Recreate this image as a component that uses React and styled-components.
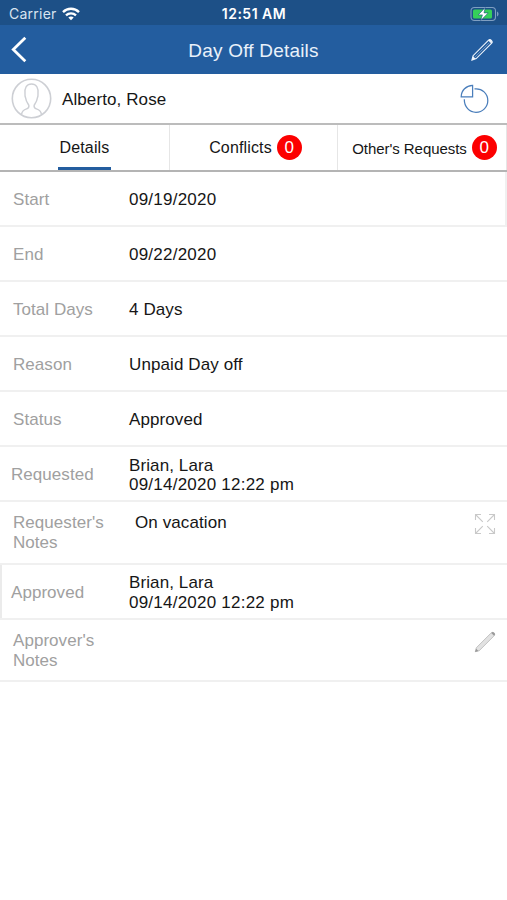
import React, { useState } from 'react';
import styled, { createGlobalStyle } from 'styled-components';

const rows = [
  { label: 'Start', value: '09/19/2020', edge: 'right' },
  { label: 'End', value: '09/22/2020' },
  { label: 'Total Days', value: '4 Days' },
  { label: 'Reason', value: 'Unpaid Day off' },
  { label: 'Status', value: 'Approved' },
  { label: 'Requested', value: 'Brian, Lara', date: '09/14/2020 12:22 pm', outdent: true },
  { label: "Requester's Notes", value: 'On vacation', notes: true, icon: 'expand' },
  { label: 'Approved', value: 'Brian, Lara', date: '09/14/2020 12:22 pm', outdent: true, edge: 'left' },
  { label: "Approver's Notes", value: '', notes: true, icon: 'pencil' },
];

const WifiIcon = () => (
  <svg width="18" height="14" viewBox="0 0 18 14" fill="none" stroke="#fff" strokeWidth="2.3">
    <path d="M1 5.1C5.4 .6 12.6 .6 17 5.1" />
    <path d="M4 8.3C6.8 5.6 11.2 5.6 14 8.3" />
    <path d="M6.3 10.5C7.8 9.1 10.2 9.1 11.7 10.5L9 13.3Z" fill="#fff" stroke="none" />
  </svg>
);

const BatteryIcon = () => (
  <svg width="29" height="16" viewBox="0 0 29 16">
    <rect x="1" y="1.5" width="24.5" height="13" rx="3.4" fill="none" stroke="#7f9fc2" strokeWidth="1.1" />
    <path d="M27 5.5C29 6.4 29 9.6 27 10.5Z" fill="#7f9fc2" />
    <rect x="3" y="3.5" width="19" height="9" rx="1.6" fill="#35d05a" />
    <path d="M15.2 1.6L8.2 8.9H12.4L10.7 14.5L18.2 6.9H14Z" fill="#fff" stroke="#1d5087" strokeWidth=".6" />
  </svg>
);

const BackIcon = () => (
  <svg width="16" height="27" viewBox="0 0 16 27" fill="none" stroke="#fff" strokeWidth="2.8">
    <path d="M14.3 1.8L2.3 13.5L14.3 25.2" />
  </svg>
);

const EditIcon = () => (
  <svg width="24" height="24" viewBox="0 0 24 24" fill="none" stroke="#eef4fb" strokeWidth="1.15">
    <path d="M2 22L3.1 17.7L18.6 2.2C19.4 1.4 20.4 1.4 21.3 2.3S22.5 4.3 21.7 5.1L6.2 20.6Z" />
    <path d="M5 19L19.3 4.7" strokeWidth=".6" strokeOpacity=".6" />
    <path d="M2 22L3 18.2L5.8 20.7ZM18.2 2.6L21.2 5.6L22 4.5C22.2 3 20.8 1.5 19.4 1.6Z" fill="#eef4fb" stroke="none" />
  </svg>
);

const PieIcon = () => (
  <svg width="30" height="30" viewBox="0 0 30 30" fill="none" stroke="#4a7ebb" strokeWidth="1.25">
    <path d="M12.6 12.8H1.2C1.2 6.4 6.2 1.5 12.6 1.3Z" />
    <path d="M14.5 4.9C22.3 3.9 27.8 9.9 27.8 16.5S22.6 28.3 16 28.3C9.4 28.3 4.2 22.9 4.3 15.3" />
  </svg>
);

const AvatarIcon = () => (
  <svg width="41" height="41" viewBox="0 0 41 41" fill="none" stroke="#cdcfd4" strokeWidth="1.4">
    <circle cx="20.5" cy="20.5" r="19.2" strokeWidth="1.6" />
    <path d="M10.5 36.6C11 33.2 12.5 31.8 15.6 30.9C17.6 30.3 18.1 29.4 17.9 27.6C17.7 26.1 15.3 24.6 14.8 20.6C14.3 19.3 13.8 17.8 14 16.5C13.2 9.8 15.8 6 20.5 6S27.8 9.8 27 16.5C27.2 17.8 26.7 19.3 26.2 20.6C25.7 24.6 23.3 26.1 23.1 27.6C22.9 29.4 23.4 30.3 25.4 30.9C28.5 31.8 30 33.2 30.5 36.6" />
  </svg>
);

const ExpandIcon = () => (
  <svg width="22" height="22" viewBox="0 0 22 22" fill="none" stroke="#c9c9c9" strokeWidth="1.1">
    <path d="M1.5 7V1.5H7M1.5 1.5L8.8 8.8M15 1.5H20.5V7M20.5 1.5L13.2 8.8M1.5 15V20.5H7M1.5 20.5L8.8 13.2M15 20.5H20.5V15M20.5 20.5L13.2 13.2" />
  </svg>
);

const PencilIcon = () => (
  <svg width="22" height="22" viewBox="0 0 22 22" fill="none">
    <path d="M1.3 20.7L2.3 16.8L17 2.1C18 1.1 19 1.2 19.9 2.1S20.9 4 19.9 5L5.2 19.7Z" fill="#e2e2e2" stroke="#c2c2c2" />
    <path d="M1 21L2.2 17.8L4.4 20ZM17.2 1.9L20.1 4.8L21 3.6C21 2 20 1 18.5 1Z" fill="#999" />
  </svg>
);

const App = () => {
  const [tab, setTab] = useState('Details');

  return (
    <Screen>
      <GlobalStyle />
      <StatusBar>
        <Carrier>
          Carrier
          <WifiIcon />
        </Carrier>
        <Clock>12:51 AM</Clock>
        <Battery>
          <BatteryIcon />
        </Battery>
      </StatusBar>
      <NavBar>
        <IconButton aria-label="Back">
          <BackIcon />
        </IconButton>
        <Title>Day Off Details</Title>
        <IconButton aria-label="Edit" $end>
          <EditIcon />
        </IconButton>
      </NavBar>
      <Employee>
        <AvatarIcon />
        <Name>Alberto, Rose</Name>
        <PieIcon />
      </Employee>
      <Tabs>
        <Tab onClick={() => setTab('Details')}>
          <TabLabel $active={tab === 'Details'}>Details</TabLabel>
        </Tab>
        <Tab onClick={() => setTab('Conflicts')} $shift="4px">
          <TabLabel $active={tab === 'Conflicts'}>Conflicts</TabLabel>
          <Badge>0</Badge>
        </Tab>
        <Tab onClick={() => setTab('Others')} $shift="5px">
          <TabLabel $active={tab === 'Others'} $small>Other's Requests</TabLabel>
          <Badge>0</Badge>
        </Tab>
      </Tabs>
      {rows.map((row) => (
        <Row key={row.label} $notes={row.notes} $edge={row.edge}>
          <Label $outdent={row.outdent}>{row.label}</Label>
          <Value $notes={row.notes}>
            <Line $date={/^\d\d/.test(row.value)}>{row.value}</Line>
            {row.date && <Line $date>{row.date}</Line>}
          </Value>
          {row.icon === 'expand' && <ExpandIcon />}
          {row.icon === 'pencil' && <PencilIcon />}
        </Row>
      ))}
    </Screen>
  );
};

export default App;

const GlobalStyle = createGlobalStyle`
  * {
    box-sizing: border-box;
  }

  body {
    margin: 0;
    background: #fff;
  }

  svg {
    display: block;
    flex: none;
  }
`;

const Screen = styled.div`
  width: 507px;
  height: 900px;
  overflow: hidden;
  background: #fff;
  color: #161616;
  font-family: 'Liberation Sans', Arial, sans-serif;
  font-size: 17px;
`;

const StatusBar = styled.div`
  display: grid;
  grid-template-columns: 1fr auto 1fr;
  align-items: center;
  height: 25px;
  padding: 2px 8px 0 9px;
  background: #1d5087;
  color: #fff;
  font-family: Inter, sans-serif;
  font-size: 14px;
`;

const Carrier = styled.div`
  display: flex;
  align-items: center;
  gap: 5px;
  color: #d9e4f0;
  letter-spacing: 0.25px;
`;

const Clock = styled.div`
  font-weight: 600;
  letter-spacing: 0.5px;
`;

const Battery = styled.div`
  display: flex;
  justify-content: flex-end;
`;

const NavBar = styled.div`
  display: grid;
  grid-template-columns: 60px 1fr 60px;
  align-items: center;
  height: 49px;
  padding: 0 13px 0 11px;
  background: #235d9f;
`;

const IconButton = styled.button`
  display: flex;
  justify-content: ${(props) => (props.$end ? 'flex-end' : 'flex-start')};
  padding: 0;
  border: none;
  background: none;
  cursor: pointer;
`;

const Title = styled.div`
  padding: 2px 0 0 2px;
  color: #e9f1fa;
  font-size: 19px;
  letter-spacing: 0.2px;
  text-align: center;
`;

const Employee = styled.div`
  display: flex;
  align-items: center;
  height: 51px;
  padding: 0 17px 0 11px;
  border-bottom: 2px solid #bcbcbc;
`;

const Name = styled.div`
  flex: 1;
  margin-left: 10px;
  padding-top: 2px;
  letter-spacing: 0.1px;
`;

const Tabs = styled.div`
  display: grid;
  grid-template-columns: 170px 168px 169px;
  height: 47px;
  border-bottom: 2px solid #b4b4b4;
`;

const Tab = styled.div`
  display: flex;
  align-items: center;
  justify-content: center;
  gap: 5px;
  border-right: 1px solid #e6e6e6;
  padding-left: ${(props) => props.$shift || '0'};
  cursor: pointer;
`;

const TabLabel = styled.div`
  display: flex;
  align-items: center;
  height: 100%;
  padding: 1px 2px 0;
  margin: 0 -2px;
  font-size: ${(props) => (props.$small ? '15px' : '16px')};
  letter-spacing: ${(props) => (props.$small ? '-0.05px' : '0.15px')};
  white-space: nowrap;
  box-shadow: ${(props) => (props.$active ? 'inset 0 -3px #235d9f' : 'none')};
`;

const Badge = styled.div`
  display: flex;
  align-items: center;
  justify-content: center;
  width: 25px;
  height: 25px;
  padding-top: 1px;
  border-radius: 50%;
  background: #fc0000;
  color: #fff;
  font-size: 17px;
`;

const Row = styled.div`
  display: flex;
  align-items: ${(props) => (props.$notes ? 'flex-start' : 'center')};
  height: ${(props) => (props.$notes ? '62.5px' : '55px')};
  padding: ${(props) => (props.$notes ? '11px 11px 0 0' : '3px 0 0')};
  border-bottom: 2px solid #f0f0f0;
  box-shadow: ${(props) => {
    if (props.$edge === 'right') return 'inset -2px 0 #f0f0f0';
    if (props.$edge === 'left') return 'inset 2px 0 #ebebeb';
    return 'none';
  }};
`;

const Label = styled.div`
  flex: none;
  width: 129px;
  padding-left: ${(props) => (props.$outdent ? '11px' : '13px')};
  padding-right: 20px;
  color: #a0a0a0;
  line-height: 20px;
  letter-spacing: 0.05px;
`;

const Value = styled.div`
  flex: 1;
  padding-left: ${(props) => (props.$notes ? '6px' : '0')};
`;

const Line = styled.div`
  line-height: 19.5px;
  letter-spacing: ${(props) => (props.$date ? '0.23px' : '0.1px')};
`;
